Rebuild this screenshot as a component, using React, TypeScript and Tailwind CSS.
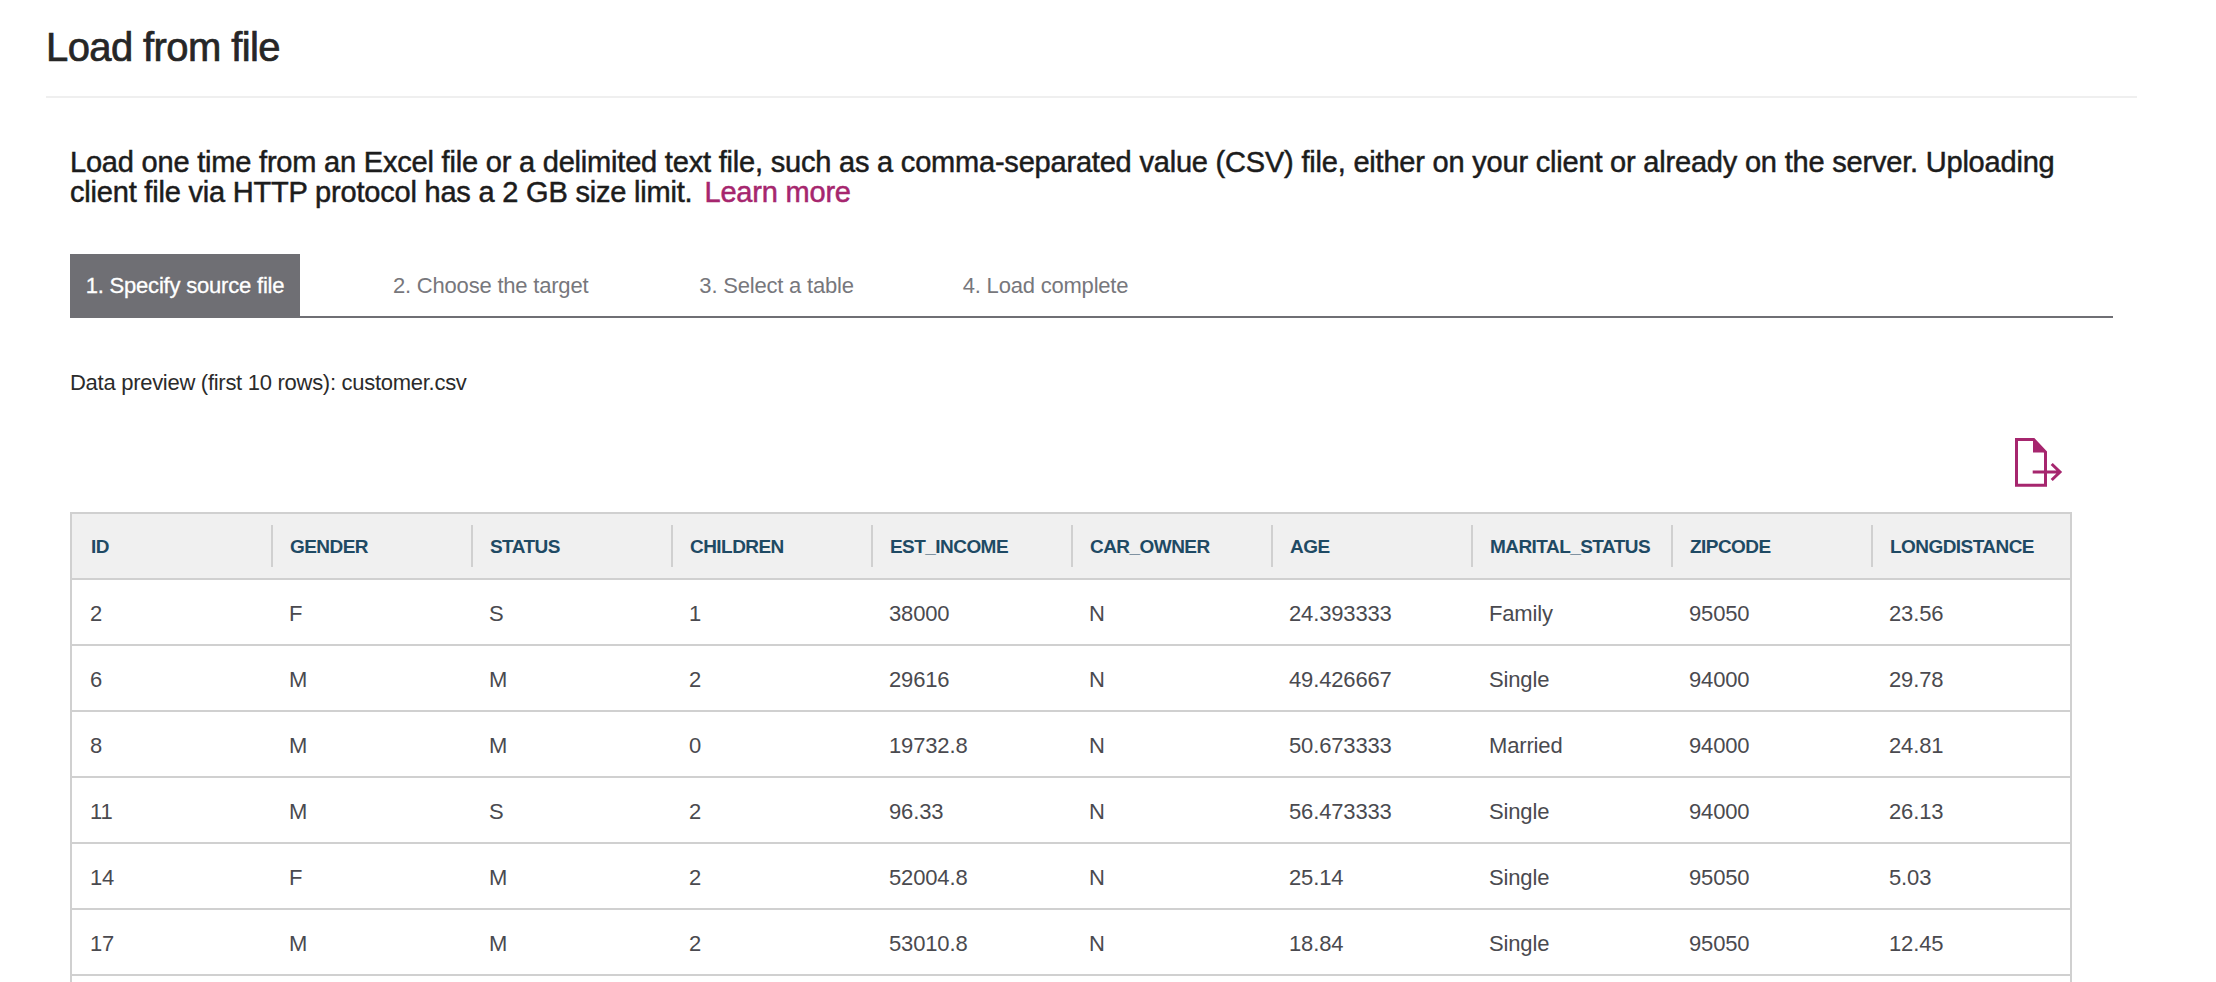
const font = "font-['Liberation_Sans','Arial',sans-serif]";

const columns = ["ID", "GENDER", "STATUS", "CHILDREN", "EST_INCOME", "CAR_OWNER", "AGE", "MARITAL_STATUS", "ZIPCODE", "LONGDISTANCE"];
const rows = [
  ["2", "F", "S", "1", "38000", "N", "24.393333", "Family", "95050", "23.56"],
  ["6", "M", "M", "2", "29616", "N", "49.426667", "Single", "94000", "29.78"],
  ["8", "M", "M", "0", "19732.8", "N", "50.673333", "Married", "94000", "24.81"],
  ["11", "M", "S", "2", "96.33", "N", "56.473333", "Single", "94000", "26.13"],
  ["14", "F", "M", "2", "52004.8", "N", "25.14", "Single", "95050", "5.03"],
  ["17", "M", "M", "2", "53010.8", "N", "18.84", "Single", "95050", "12.45"],
];

function ExportIcon() {
  return (
    <svg width="48" height="49" viewBox="0 0 48 49" fill="none" className="block">
      <path d="M1.5 1.5H18.7L30.5 14V47.2H1.5Z" stroke="#a6266e" strokeWidth="3" />
      <path d="M18 2V14.5H31Z" fill="#a6266e" />
      <path d="M17.7 34H45M36.7 26L45 34L36.7 42" stroke="#a6266e" strokeWidth="3" />
    </svg>
  );
}

export default function App() {
  return (
    <div className={`${font} h-[982px] w-[2216px] overflow-hidden bg-white`}>
      <div className="mx-[46px] w-[2091px] border-b-2 border-[#efefef] h-[98px] pt-[23px]">
        <h1 className="text-[40px] leading-[48px] tracking-[-0.6px] text-[#262626] [-webkit-text-stroke:0.7px_#262626]">Load from file</h1>
      </div>

      <p className="ml-[70px] mt-[49px] w-[2040px] text-[29px] leading-[30px] tracking-[-0.2px] text-[#1c1c1c] [-webkit-text-stroke:0.5px_#1c1c1c]">
        Load one time from an Excel file or a delimited text file, such as a comma-separated value (CSV) file, either on your client or already on the server. Uploading client file via HTTP protocol has a 2 GB size limit.
        <span className="ml-[12px] text-[#a6266e] [-webkit-text-stroke:0.5px_#a6266e]">Learn more</span>
      </p>

      <div className="ml-[70px] mt-[47px] flex h-[64px] w-[2043px] items-stretch border-b-2 border-[#6f6f74] text-[22px] tracking-[-0.2px]">
        <div className="flex w-[230px] items-center justify-center bg-[#6f6f74] pt-[1px] text-white [-webkit-text-stroke:0.3px_#ffffff]">1. Specify source file</div>
        <div className="ml-[93px] flex items-center pt-[1px] text-[#77777c]">2. Choose the target</div>
        <div className="ml-[111px] flex items-center pt-[1px] text-[#77777c]">3. Select a table</div>
        <div className="ml-[109px] flex items-center pt-[1px] text-[#77777c]">4. Load complete</div>
      </div>

      <p className="ml-[70px] mt-[51px] text-[22px] leading-[28px] tracking-[-0.28px] text-[#2b2b2b]">Data preview (first 10 rows): customer.csv</p>

      <div className="ml-[70px] mt-[41px] w-[2002px]">
        <div className="flex justify-end pr-[9px]">
          <ExportIcon />
        </div>
        <table className="mt-[25px] w-full table-fixed border-collapse border-2 border-[#d0d0d0]">
          <thead>
            <tr className="h-[66px] bg-[#f0f0f0]">
              {columns.map((c, i) => (
                <th key={c} className="border-b-2 border-[#d0d0d0] p-0 text-left font-bold">
                  <div className={`flex h-[42px] items-center pt-[2px] text-[19px] tracking-[-0.55px] text-[#1f4a64] ${i > 0 ? "border-l-2 border-[#d0d0d0] pl-[17px]" : "pl-[19px]"}`}>
                    {c}
                  </div>
                </th>
              ))}
            </tr>
          </thead>
          <tbody>
            {rows.map((r) => (
              <tr key={r[0]} className="h-[66px] border-b-2 border-[#d0d0d0]">
                {r.map((v, i) => (
                  <td key={i} className="p-0 pl-[18px] pt-[2px] text-[22px] tracking-[-0.15px] text-[#4a4a4f]">{v}</td>
                ))}
              </tr>
            ))}
            <tr className="h-[66px]"><td colSpan={10} /></tr>
          </tbody>
        </table>
      </div>
    </div>
  );
}
